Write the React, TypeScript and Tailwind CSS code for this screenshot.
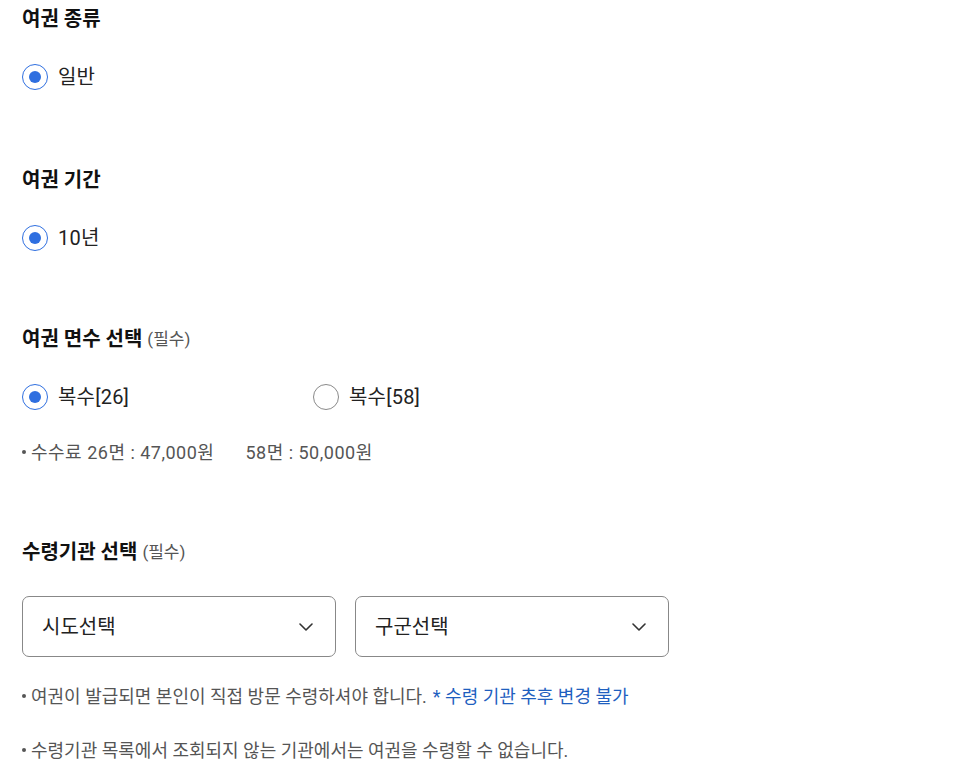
import { useState } from "react";

const font = { fontFamily: 'Roboto, "Noto Sans CJK KR", "Noto Sans", sans-serif' };

const Radio = ({ checked, label, onClick }: { checked: boolean; label: string; onClick?: () => void }) => (
  <button type="button" onClick={onClick} className="flex items-center h-[26px] gap-[10px] text-left">
    <span
      className={
        "flex items-center justify-center w-[26px] h-[26px] rounded-full border-[1.5px] bg-white " +
        (checked ? "border-[#2f6fe0]" : "border-[#8a8a8a]")
      }
    >
      {checked && <span className="block w-[12px] h-[12px] rounded-full bg-[#2f6fe0]" />}
    </span>
    <span className="text-[20px] text-[#222] leading-none tracking-[0.2px]">{label}</span>
  </button>
);

const Heading = ({ title, required }: { title: string; required?: boolean }) => (
  <h2 className="h-[28px] flex items-center text-[20px] font-bold text-[#111] leading-none">
    {title}
    {required && <span className="ml-[5px] text-[17px] font-normal text-[#555]">(필수)</span>}
  </h2>
);

const Chevron = () => (
  <svg width="14" height="8" viewBox="0 0 14 8" fill="none">
    <path d="M1 1l6 6 6-6" stroke="#333" strokeWidth="1.6" strokeLinecap="round" strokeLinejoin="round" />
  </svg>
);

const SelectBox = ({ label }: { label: string }) => (
  <div className="flex items-center justify-between w-[314px] h-[61px] rounded-[7px] border border-[#888] pl-[19px] pr-[22px] bg-white">
    <span className="text-[20px] text-[#222]">{label}</span>
    <Chevron />
  </div>
);

const Note = ({ children, className = "" }: { children: React.ReactNode; className?: string }) => (
  <div className={"flex items-center h-[24px] text-[18px] text-[#555] " + className}>
    <span className="w-[4px] h-[4px] rounded-full bg-[#555] mr-[5px]" />
    {children}
  </div>
);

export default function App() {
  const [pages, setPages] = useState("26");

  return (
    <div className="min-h-screen bg-white px-[22px] pt-[5px]" style={font}>
      <Heading title="여권 종류" />
      <div className="mt-[31px]">
        <Radio checked label="일반" />
      </div>

      <div className="mt-[76px]">
        <Heading title="여권 기간" />
      </div>
      <div className="mt-[31px]">
        <Radio checked label="10년" />
      </div>

      <div className="mt-[74px]">
        <Heading title="여권 면수 선택" required />
      </div>
      <div className="mt-[31px] flex">
        <div className="w-[291px]">
          <Radio checked={pages === "26"} label="복수[26]" onClick={() => setPages("26")} />
        </div>
        <Radio checked={pages === "58"} label="복수[58]" onClick={() => setPages("58")} />
      </div>
      <div className="mt-[30px]">
        <Note className="tracking-[0.5px]">
          수수료 26면 : 47,000원<span className="ml-[31px]">58면 : 50,000원</span>
        </Note>
      </div>

      <div className="mt-[74px]">
        <Heading title="수령기관 선택" required />
      </div>
      <div className="mt-[30px] flex gap-[19px]">
        <SelectBox label="시도선택" />
        <SelectBox label="구군선택" />
      </div>
      <div className="mt-[27px]">
        <Note>
          여권이 발급되면 본인이 직접 방문 수령하셔야 합니다.
          <span className="ml-[6px] text-[#1f5fbf]">* 수령 기관 추후 변경 불가</span>
        </Note>
      </div>
      <div className="mt-[30px]">
        <Note>수령기관 목록에서 조회되지 않는 기관에서는 여권을 수령할 수 없습니다.</Note>
      </div>
    </div>
  );
}
